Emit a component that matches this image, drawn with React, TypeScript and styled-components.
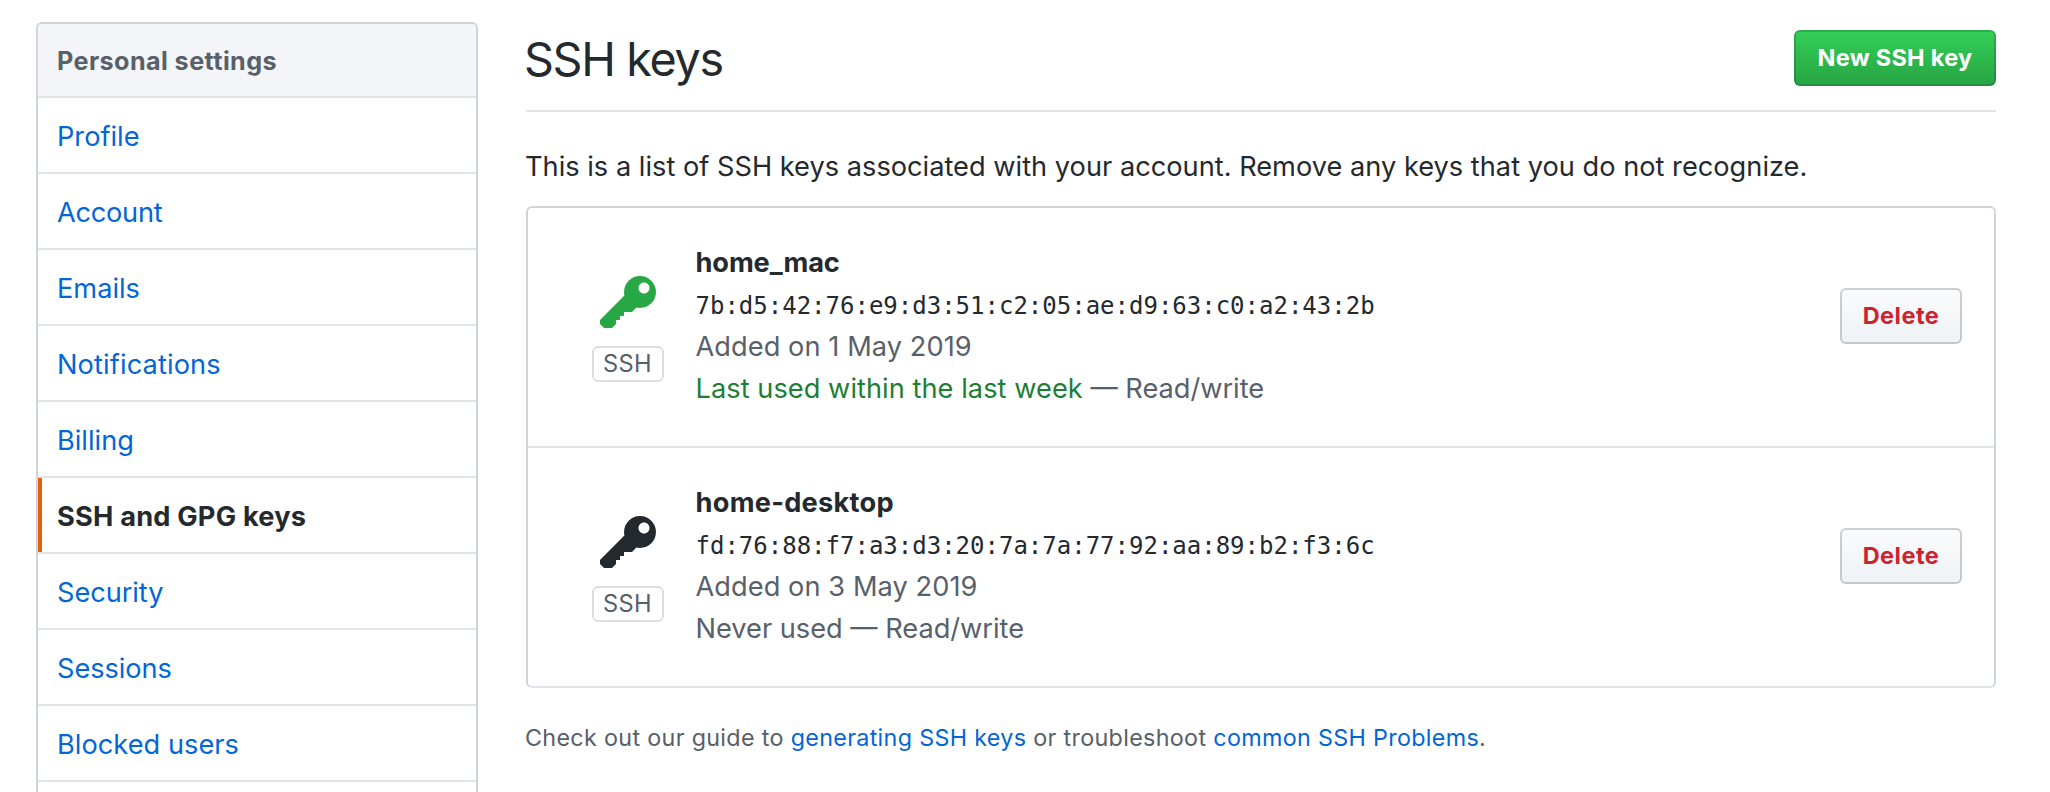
import React from "react";
import styled, { createGlobalStyle } from "styled-components";

const GlobalStyle = createGlobalStyle`
  *, *::before, *::after { box-sizing: border-box; }
  body {
    margin: 0;
    background: #fff;
    color: #24292e;
    font-family: Inter, "Liberation Sans", sans-serif;
    font-size: 27.2px;
    line-height: 42px;
  }
  a { color: #0366d6; text-decoration: none; }
`;

const Page = styled.div`
  display: flex;
  align-items: flex-start;
  gap: 48px;
  height: 792px;
  padding: 22px 54px 0 36px;
  overflow: hidden;
`;

const Menu = styled.nav`
  flex: none;
  width: 442px;
  border: 2px solid #d1d5da;
  border-radius: 6px;
  overflow: hidden;
`;

const MenuHeading = styled.h3`
  height: 74px;
  margin: 0;
  padding: 2px 19px 0;
  background: #f3f5f8;
  border-bottom: 2px solid #e1e4e8;
  color: #586069;
  font-size: 25.2px;
  font-weight: 650;
  line-height: 71px;
  letter-spacing: 0.4px;
`;

const MenuItem = styled.a<{ $active?: boolean; $tracking?: number }>`
  display: block;
  height: 76px;
  padding: 2px 19px 0;
  border-bottom: 2px solid #e1e4e8;
  box-shadow: ${(p) => (p.$active ? "inset 4px 0 0 #e36209" : "none")};
  line-height: 74px;
  letter-spacing: ${(p) => p.$tracking ?? 0}px;
  ${(p) => p.$active && "color: #24292e; font-weight: 650;"}
`;

const Main = styled.main`
  flex: 1;
  min-width: 0;
`;

const Subhead = styled.header`
  display: flex;
  align-items: flex-start;
  justify-content: space-between;
  height: 90px;
  padding-top: 8px;
  border-bottom: 2px solid #e1e4e8;
`;

const Title = styled.h2`
  margin: 0 0 0 -2px;
  font-size: 46.7px;
  font-weight: 400;
  line-height: 58px;
  letter-spacing: -1.35px;
`;

const Button = styled.button<{ $variant: "primary" | "danger" }>`
  flex: none;
  width: ${(p) => (p.$variant === "primary" ? 202 : 122)}px;
  height: 56px;
  padding: 0;
  border: 2px solid rgba(27, 31, 35, 0.2);
  border-radius: 6px;
  background-color: ${(p) => (p.$variant === "primary" ? "#28a745" : "#eff3f6")};
  background-image: ${(p) =>
    p.$variant === "primary"
      ? "linear-gradient(180deg, #34d058, #28a745 90%)"
      : "linear-gradient(180deg, #fafbfc, #eff3f6 90%)"};
  background-repeat: repeat-x;
  background-position: -2px -2px;
  background-size: 110% 110%;
  color: ${(p) => (p.$variant === "primary" ? "#fff" : "#cb2431")};
  font: 650 23.5px/52px Inter, "Liberation Sans", sans-serif;
  letter-spacing: ${(p) => (p.$variant === "primary" ? 0.28 : 0.5)}px;
  white-space: nowrap;
`;

const Intro = styled.p`
  margin: 34px 0 18px -1px;
  letter-spacing: 0.012px;
`;

const KeyList = styled.ul`
  margin: 0;
  padding: 0;
  list-style: none;
  border: 2px solid #d1d5da;
  border-bottom: 0;
  border-radius: 6px;
`;

const KeyRow = styled.li`
  display: flex;
  align-items: flex-start;
  height: 240px;
  padding: 34px 32px 0 64px;
  border-bottom: 2px solid #e1e4e8;
  &:last-child { border-radius: 0 0 5px 5px; }
`;

const KeyType = styled.div`
  display: flex;
  flex-direction: column;
  align-items: center;
  width: 72px;
  padding-top: 30px;
`;

const KeyIcon = styled.svg<{ $recent: boolean }>`
  display: block;
  width: 56px;
  height: 64px;
  fill: ${(p) => (p.$recent ? "#28a745" : "#24292e")};
`;

const TypeBadge = styled.span`
  width: 72px;
  height: 36px;
  margin-top: 10px;
  padding-right: 1px;
  border: 2px solid #ddd;
  border-radius: 6px;
  color: #586069;
  font-size: 23.6px;
  line-height: 32px;
  letter-spacing: 0.4px;
  text-align: center;
`;

const KeyDetails = styled.div`
  flex: 1;
  margin-left: 31.5px;
  color: #586069;
`;

const KeyName = styled.strong<{ $tracking: number }>`
  display: block;
  color: #24292e;
  font-weight: 650;
  letter-spacing: ${(p) => p.$tracking}px;
`;

const Fingerprint = styled.code`
  display: block;
  margin-bottom: -3px;
  color: #24292e;
  font: 24px/45px "DejaVu Sans Mono", monospace;
`;

const AddedOn = styled.div`
  letter-spacing: 0.07px;
`;

const Recent = styled.span`
  color: #1e7e34;
  letter-spacing: 0.05px;
`;

const RowAction = styled.div`
  padding-top: 46px;
`;

const Help = styled.p`
  margin: 29px 0 0 -1px;
  color: #586069;
  font-size: 23.3px;
  letter-spacing: 0.33px;
`;

const menu = [
  { label: "Profile" },
  { label: "Account", tracking: -0.25 },
  { label: "Emails" },
  { label: "Notifications", tracking: 0.12 },
  { label: "Billing" },
  { label: "SSH and GPG keys", tracking: 0.2, active: true },
  { label: "Security", tracking: -0.05 },
  { label: "Sessions", tracking: -0.05 },
  { label: "Blocked users", tracking: 0.03 },
];

const keys = [
  {
    name: "home_mac",
    tracking: -0.1,
    fingerprint: "7b:d5:42:76:e9:d3:51:c2:05:ae:d9:63:c0:a2:43:2b",
    added: "Added on 1 May 2019",
    used: "Last used within the last week",
    recent: true,
  },
  {
    name: "home-desktop",
    tracking: 0.27,
    fingerprint: "fd:76:88:f7:a3:d3:20:7a:7a:77:92:aa:89:b2:f3:6c",
    added: "Added on 3 May 2019",
    used: "Never used",
    recent: false,
  },
];

export default function App() {
  return (
    <>
      <GlobalStyle />
      <Page>
        <Menu>
          <MenuHeading>Personal settings</MenuHeading>
          {menu.map((m) => (
            <MenuItem key={m.label} href="#" $active={m.active} $tracking={m.tracking}>
              {m.label}
            </MenuItem>
          ))}
          <MenuItem as="div" />
        </Menu>
        <Main>
          <Subhead>
            <Title>SSH keys</Title>
            <Button $variant="primary">New SSH key</Button>
          </Subhead>
          <Intro>
            This is a list of SSH keys associated with your account. Remove any keys that you do
            not recognize.
          </Intro>
          <KeyList>
            {keys.map((k) => (
              <KeyRow key={k.name}>
                <KeyType>
                  <KeyIcon viewBox="0 0 14 16" $recent={k.recent} aria-hidden="true">
                    <path
                      fillRule="evenodd"
                      d="M12.83 2.17C12.08 1.42 11.14 1.03 10 1c-1.13.03-2.08.42-2.83 1.17S6.04 3.86 6.01 5c0 .3.03.59.09.89L0 12v1l1 1h2l1-1v-1h1v-1h1v-1h2l1.09-1.11c.3.08.59.11.91.11 1.14-.03 2.08-.42 2.83-1.17S13.97 6.14 14 5c-.03-1.14-.42-2.08-1.17-2.83zM11 5.38c-.77 0-1.38-.61-1.38-1.38 0-.77.61-1.38 1.38-1.38.77 0 1.38.61 1.38 1.38 0 .77-.61 1.38-1.38 1.38z"
                    />
                  </KeyIcon>
                  <TypeBadge>SSH</TypeBadge>
                </KeyType>
                <KeyDetails>
                  <KeyName $tracking={k.tracking}>{k.name}</KeyName>
                  <Fingerprint>{k.fingerprint}</Fingerprint>
                  <AddedOn>{k.added}</AddedOn>
                  <div>
                    {k.recent ? <Recent>{k.used}</Recent> : k.used} — Read/write
                  </div>
                </KeyDetails>
                <RowAction>
                  <Button $variant="danger">Delete</Button>
                </RowAction>
              </KeyRow>
            ))}
          </KeyList>
          <Help>
            Check out our guide to <a href="#">generating SSH keys</a> or troubleshoot{" "}
            <a href="#">common SSH Problems</a>.
          </Help>
        </Main>
      </Page>
    </>
  );
}
